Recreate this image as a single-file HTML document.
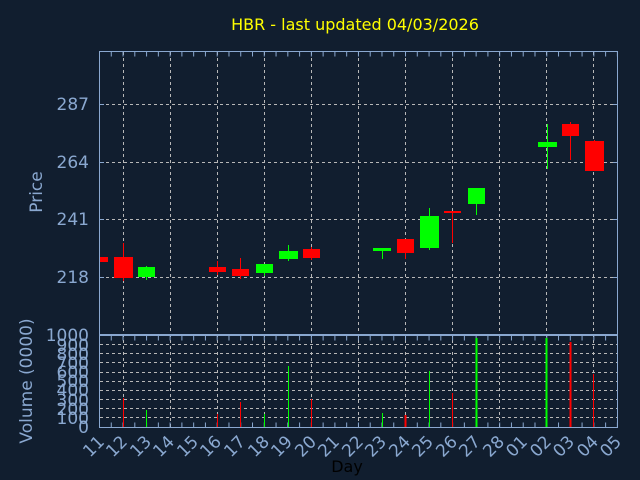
<!DOCTYPE html>
<html><head><meta charset="utf-8"><style>
html,body{margin:0;padding:0;background:#111e2f;}
svg{display:block;font-family:"DejaVu Sans","Liberation Sans",sans-serif;}
</style></head><body>
<svg width="640" height="480" viewBox="0 0 640 480" xmlns="http://www.w3.org/2000/svg">
<rect width="640" height="480" fill="#111e2f"/>
<text x="355" y="30" fill="#ffff00" font-size="16" text-anchor="middle">HBR - last updated 04/03/2026</text>
<g stroke="#b8b8b8" stroke-width="1" stroke-dasharray="3,3">
<line x1="123.5" y1="52" x2="123.5" y2="427"/><line x1="170.5" y1="52" x2="170.5" y2="427"/>
<line x1="217.5" y1="52" x2="217.5" y2="427"/><line x1="264.5" y1="52" x2="264.5" y2="427"/>
<line x1="311.5" y1="52" x2="311.5" y2="427"/><line x1="358.5" y1="52" x2="358.5" y2="427"/>
<line x1="405.5" y1="52" x2="405.5" y2="427"/><line x1="452.5" y1="52" x2="452.5" y2="427"/>
<line x1="499.5" y1="52" x2="499.5" y2="427"/><line x1="546.5" y1="52" x2="546.5" y2="427"/>
<line x1="593.5" y1="52" x2="593.5" y2="427"/>
<line x1="100" y1="104.5" x2="617" y2="104.5"/><line x1="100" y1="162.5" x2="617" y2="162.5"/>
<line x1="100" y1="219.5" x2="617" y2="219.5"/><line x1="100" y1="277.5" x2="617" y2="277.5"/>
<line x1="100" y1="417.5" x2="617" y2="417.5"/><line x1="100" y1="408.5" x2="617" y2="408.5"/>
<line x1="100" y1="399.5" x2="617" y2="399.5"/><line x1="100" y1="390.5" x2="617" y2="390.5"/>
<line x1="100" y1="381.5" x2="617" y2="381.5"/><line x1="100" y1="372.5" x2="617" y2="372.5"/>
<line x1="100" y1="362.5" x2="617" y2="362.5"/><line x1="100" y1="353.5" x2="617" y2="353.5"/>
<line x1="100" y1="344.5" x2="617" y2="344.5"/>
</g>
<g stroke="#8aa8d0" stroke-width="1" fill="none">
<rect x="99.5" y="51.5" width="518" height="283"/>
<rect x="99.5" y="335.5" width="518" height="92"/>
<line x1="99" y1="54" x2="618" y2="54" stroke-width="5" stroke-dasharray="1,10.77"/>
<line x1="99" y1="425" x2="618" y2="425" stroke-width="5" stroke-dasharray="1,10.77"/>
<line x1="99" y1="338" x2="618" y2="338" stroke-width="5" stroke-dasharray="1,10.77"/>
<line x1="123" y1="51" x2="618" y2="51" stroke-width="0"/>
<line x1="100" y1="104.5" x2="104" y2="104.5"/><line x1="100" y1="162.5" x2="104" y2="162.5"/>
<line x1="100" y1="219.5" x2="104" y2="219.5"/><line x1="100" y1="277.5" x2="104" y2="277.5"/>
<line x1="613" y1="104.5" x2="617" y2="104.5"/><line x1="613" y1="162.5" x2="617" y2="162.5"/>
<line x1="613" y1="219.5" x2="617" y2="219.5"/><line x1="613" y1="277.5" x2="617" y2="277.5"/>
</g>
<!-- candles -->
<g fill="#ff0000" stroke="#ff0000">
<rect x="100" y="257" width="8" height="5" stroke="none"/>
<line x1="123.5" y1="243" x2="123.5" y2="281"/><rect x="114" y="257" width="19" height="21" stroke="none"/>
<line x1="217.5" y1="261" x2="217.5" y2="275"/><rect x="209" y="267" width="17" height="5" stroke="none"/>
<line x1="240.5" y1="258" x2="240.5" y2="279"/><rect x="232" y="269" width="17" height="7" stroke="none"/>
<line x1="311.5" y1="247" x2="311.5" y2="260"/><rect x="303" y="249" width="17" height="9" stroke="none"/>
<line x1="405.5" y1="239" x2="405.5" y2="259"/><rect x="397" y="239" width="17" height="14" stroke="none"/>
<line x1="452.5" y1="211" x2="452.5" y2="243"/><rect x="444" y="211" width="17" height="2" stroke="none"/>
<line x1="570.5" y1="122" x2="570.5" y2="160"/><rect x="562" y="124" width="17" height="12" stroke="none"/>
<line x1="594.5" y1="140" x2="594.5" y2="171"/><rect x="585" y="141" width="19" height="30" stroke="none"/>
</g>
<g fill="#00ff00" stroke="#00ff00">
<line x1="146.5" y1="266" x2="146.5" y2="280"/><rect x="138" y="267" width="17" height="10" stroke="none"/>
<line x1="264.5" y1="264" x2="264.5" y2="276"/><rect x="256" y="264" width="17" height="9" stroke="none"/>
<line x1="288.5" y1="245" x2="288.5" y2="261"/><rect x="279" y="251" width="19" height="8" stroke="none"/>
<line x1="382.5" y1="248" x2="382.5" y2="259"/><rect x="373" y="248" width="18" height="3" stroke="none"/>
<line x1="429.5" y1="208" x2="429.5" y2="250"/><rect x="420" y="216" width="19" height="32" stroke="none"/>
<line x1="476.5" y1="188" x2="476.5" y2="215"/><rect x="468" y="188" width="17" height="16" stroke="none"/>
<line x1="547.5" y1="124" x2="547.5" y2="169"/><rect x="538" y="142" width="19" height="5" stroke="none"/>
</g>
<!-- volume -->
<g stroke="#ff0000">
<line x1="123.5" y1="398" x2="123.5" y2="427"/><line x1="217.5" y1="414" x2="217.5" y2="427"/>
<line x1="240.5" y1="402" x2="240.5" y2="427"/><line x1="311.5" y1="399" x2="311.5" y2="427"/>
<line x1="405.5" y1="415" x2="405.5" y2="427" stroke-width="2"/><line x1="452.5" y1="393" x2="452.5" y2="427"/>
<line x1="570.5" y1="342" x2="570.5" y2="427" stroke-width="2"/><line x1="593.5" y1="374" x2="593.5" y2="427"/>
</g>
<g stroke="#00ff00">
<line x1="146.5" y1="410" x2="146.5" y2="427"/><line x1="264.5" y1="414" x2="264.5" y2="427"/>
<line x1="288.5" y1="366" x2="288.5" y2="427"/><line x1="382.5" y1="413" x2="382.5" y2="427"/>
<line x1="429.5" y1="371" x2="429.5" y2="427"/><line x1="476.5" y1="338" x2="476.5" y2="427" stroke-width="2"/>
<line x1="546.5" y1="338" x2="546.5" y2="427" stroke-width="2"/>
</g>
<g fill="#8aa8d0" font-size="17">
<text x="89" y="110" text-anchor="end">287</text>
<text x="89" y="168" text-anchor="end">264</text>
<text x="89" y="225" text-anchor="end">241</text>
<text x="89" y="283" text-anchor="end">218</text>
<text transform="translate(42,192) rotate(-90)" text-anchor="middle">Price</text>
<text transform="translate(32,381) rotate(-90)" text-anchor="middle">Volume (0000)</text>
<text x="89" y="341" text-anchor="end">1000</text>
<text x="89" y="351" text-anchor="end">900</text>
<text x="89" y="360" text-anchor="end">800</text>
<text x="89" y="369" text-anchor="end">700</text>
<text x="89" y="378" text-anchor="end">600</text>
<text x="89" y="387" text-anchor="end">500</text>
<text x="89" y="396" text-anchor="end">400</text>
<text x="89" y="406" text-anchor="end">300</text>
<text x="89" y="415" text-anchor="end">200</text>
<text x="89" y="424" text-anchor="end">100</text>
<text x="89" y="433" text-anchor="end">0</text>
</g>
<g fill="#8aa8d0" font-size="17">
<text transform="translate(90,458) rotate(-45)">11</text>
<text transform="translate(113,458) rotate(-45)">12</text>
<text transform="translate(137,458) rotate(-45)">13</text>
<text transform="translate(160,458) rotate(-45)">14</text>
<text transform="translate(184,458) rotate(-45)">15</text>
<text transform="translate(207,458) rotate(-45)">16</text>
<text transform="translate(231,458) rotate(-45)">17</text>
<text transform="translate(255,458) rotate(-45)">18</text>
<text transform="translate(278,458) rotate(-45)">19</text>
<text transform="translate(302,458) rotate(-45)">20</text>
<text transform="translate(325,458) rotate(-45)">21</text>
<text transform="translate(349,458) rotate(-45)">22</text>
<text transform="translate(372,458) rotate(-45)">23</text>
<text transform="translate(396,458) rotate(-45)">24</text>
<text transform="translate(419,458) rotate(-45)">25</text>
<text transform="translate(443,458) rotate(-45)">26</text>
<text transform="translate(466,458) rotate(-45)">27</text>
<text transform="translate(490,458) rotate(-45)">28</text>
<text transform="translate(513,458) rotate(-45)">01</text>
<text transform="translate(537,458) rotate(-45)">02</text>
<text transform="translate(560,458) rotate(-45)">03</text>
<text transform="translate(584,458) rotate(-45)">04</text>
<text transform="translate(607,458) rotate(-45)">05</text>
</g>
<text x="347" y="472" fill="#000000" font-size="16" text-anchor="middle">Day</text>
</svg>
</body></html>
